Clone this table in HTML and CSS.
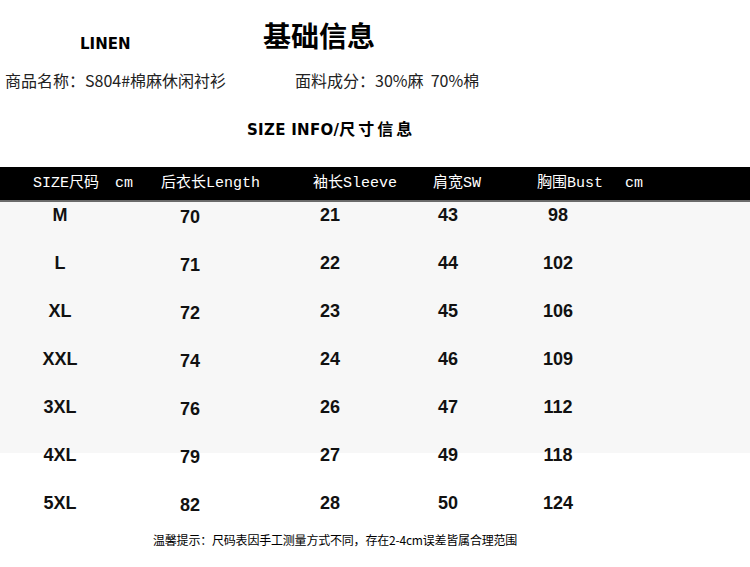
FILE: index.html
```html
<!DOCTYPE html>
<html lang="zh-CN">
<head>
<meta charset="utf-8">
<title>基础信息</title>
<link rel="stylesheet" href="styles.css">
</head>
<body>
<div class="page">
  <div class="head-row">
    <div class="brand">LINEN</div>
    <h1 class="title">基础信息</h1>
  </div>
  <div class="info-row">
    <div class="info info-left">商品名称：S804#棉麻休闲衬衫</div>
    <div class="info">面料成分：30%麻&nbsp;&nbsp;70%棉</div>
  </div>
  <div class="size-info">SIZE INFO/<span class="size-info-cn">尺寸信息</span></div>

  <div class="bar">
    <div class="bh bh-size">SIZE尺码<span class="unit">cm</span></div>
    <div class="bh bh-len">后衣长Length</div>
    <div class="bh bh-slv">袖长Sleeve</div>
    <div class="bh bh-sw">肩宽SW</div>
    <div class="bh bh-bust">胸围Bust</div>
    <div class="bh">cm</div>
  </div>

  <div class="table">
    <div class="cell">M</div><div class="cell low">70</div><div class="cell">21</div><div class="cell">43</div><div class="cell">98</div>
    <div class="cell">L</div><div class="cell low">71</div><div class="cell">22</div><div class="cell">44</div><div class="cell">102</div>
    <div class="cell">XL</div><div class="cell low">72</div><div class="cell">23</div><div class="cell">45</div><div class="cell">106</div>
    <div class="cell">XXL</div><div class="cell low">74</div><div class="cell">24</div><div class="cell">46</div><div class="cell">109</div>
    <div class="cell">3XL</div><div class="cell low">76</div><div class="cell">26</div><div class="cell">47</div><div class="cell">112</div>
    <div class="cell">4XL</div><div class="cell low">79</div><div class="cell">27</div><div class="cell">49</div><div class="cell">118</div>
    <div class="cell">5XL</div><div class="cell low">82</div><div class="cell">28</div><div class="cell">50</div><div class="cell">124</div>
  </div>

  <p class="note">温馨提示：尺码表因手工测量方式不同，存在2-4cm误差皆属合理范围</p>
</div>
</body>
</html>
```
FILE: styles.css
```css
html, body {
  margin: 0;
  padding: 0;
  background: #ffffff;
}

.page {
  width: 750px;
  height: 567px;
  overflow: hidden;
  font-family: "Noto Sans CJK SC", "Noto Sans", sans-serif;
  color: #1a1a1a;
}

.head-row {
  display: flex;
  height: 36px;
  padding-top: 17px;
}

.brand {
  margin-left: 80px;
  margin-top: 17px;
  width: 183px;
  height: 20px;
  font-family: "DejaVu Sans", sans-serif;
  font-weight: bold;
  font-size: 15px;
  line-height: 20px;
  color: #000;
}

.title {
  margin: 0;
  height: 36px;
  font-family: "Noto Sans CJK SC", sans-serif;
  font-weight: bold;
  font-size: 28px;
  line-height: 36px;
  color: #000;
}

.info-row {
  display: flex;
  height: 20px;
  margin-top: 17px;
}

.info {
  font-size: 16px;
  line-height: 20px;
  color: #222;
}

.info-left {
  margin-left: 5px;
  width: 290px;
}

.size-info {
  margin-top: 30px;
  height: 20px;
  padding-left: 247px;
  font-family: "DejaVu Sans", "Noto Sans CJK SC", sans-serif;
  font-weight: bold;
  font-size: 15px;
  line-height: 20px;
  color: #000;
  letter-spacing: 0.3px;
}

.size-info-cn {
  font-family: "Noto Sans CJK SC", sans-serif;
  font-size: 16px;
  line-height: 16px;
  letter-spacing: 3px;
}

.bar {
  margin-top: 27px;
  height: 35px;
  box-sizing: border-box;
  background: #000;
  border-bottom: 2px solid #6b6b6b;
  display: flex;
  align-items: center;
  padding-left: 33px;
  padding-bottom: 0;
  font-family: "Liberation Mono", "Noto Sans CJK SC", monospace;
  font-size: 15px;
  line-height: 20px;
  color: #fff;
}

.bh {
  white-space: nowrap;
}

.bh-size { width: 128px; }
.bh-size .unit { margin-left: 16px; }
.bh-len { width: 152px; }
.bh-slv { width: 120px; }
.bh-sw { width: 104px; }
.bh-bust { width: 88px; }

.table {
  display: grid;
  grid-template-columns: 120px 140px 140px 96px 124px;
  row-gap: 28px;
  padding-top: 3px;
  justify-items: center;
  background: linear-gradient(to bottom, #f7f7f7 0, #f7f7f7 251px, #ffffff 251px);
  font-family: "Liberation Sans Narrow", "Liberation Sans", sans-serif;
  font-weight: bold;
  font-size: 18px;
  line-height: 20px;
  color: #111;
}

.cell.low {
  padding-top: 2px;
  margin-bottom: -2px;
}

.note {
  margin: 17px 0 0 153px;
  font-size: 12px;
  line-height: 20px;
  color: #000;
  letter-spacing: -0.2px;
}
```
